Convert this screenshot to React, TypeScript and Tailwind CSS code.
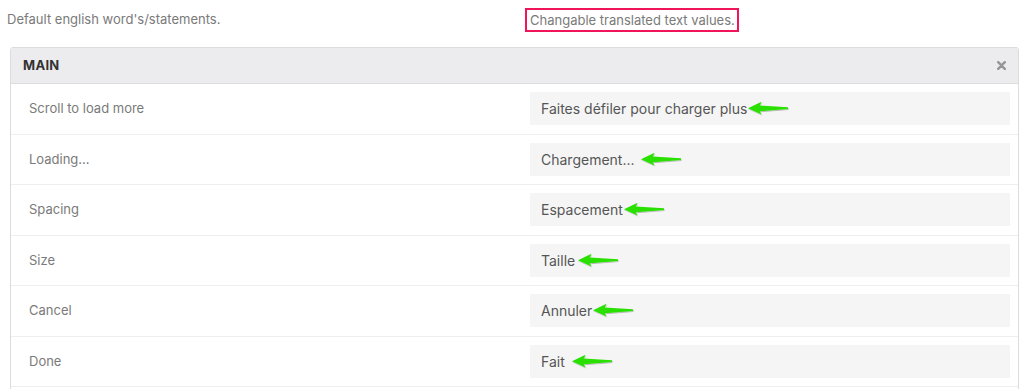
const rows = [
  { label: "Scroll to load more", value: "Faites défiler pour charger plus", gap: "ml-0" },
  { label: "Loading...", value: "Chargement...", gap: "ml-[5px]" },
  { label: "Spacing", value: "Espacement", gap: "ml-0" },
  { label: "Size", value: "Taille", gap: "ml-[2px]" },
  { label: "Cancel", value: "Annuler", gap: "ml-0" },
  { label: "Done", value: "Fait", gap: "ml-[6px]" },
  { label: "", value: "", gap: "" },
];

function GreenArrow() {
  return (
    <svg width="42" height="15" viewBox="0 0 42 15" className="shrink-0">
      <defs>
        <filter id="sh" x="-10%" y="-30%" width="130%" height="170%">
          <feDropShadow dx="0.5" dy="1" stdDeviation="0.6" floodColor="#000" floodOpacity="0.25" />
        </filter>
      </defs>
      <path
        d="M1 7.2 L14.5 0.8 L12.8 4.4 L41 6.3 L41 8 L12.8 10.2 L14.5 13.6 Z"
        fill="#2be000"
        filter="url(#sh)"
      />
    </svg>
  );
}

function CloseIcon() {
  return (
    <svg width="9" height="9" viewBox="0 0 9 9">
      <path d="M1.2 1.2 L7.8 7.8 M7.8 1.2 L1.2 7.8" stroke="#959595" strokeWidth="2.4" strokeLinecap="round" />
    </svg>
  );
}

export default function App() {
  return (
    <div className="w-[1024px] h-[389px] overflow-hidden bg-white font-['Inter',sans-serif]">
      <div className="h-[47px] flex items-start pt-[8px]">
        <div className="w-[525px] pl-[7px] pt-[2px] text-[13px] leading-[18px] text-[#7a7a7a]">
          Default english word's/statements.
        </div>
        <div className="h-[24px] pl-[3px] pr-[2px] border-2 border-[#f0145a] text-[13px] leading-[20px] text-[#7a7a7a]">
          Changable translated text values.
        </div>
      </div>

      <div className="ml-[10px] w-[1009px] border border-[#dcdcdc] rounded-t-[3px]">
        <div className="h-[36px] bg-[#ececee] border-b border-[#dcdcdc] flex items-center justify-between pl-[12px] pr-[12px]">
          <span className="text-[13px] font-bold tracking-[0.3px] text-[#333]">MAIN</span>
          <CloseIcon />
        </div>
        {rows.map((r, i) => (
          <div key={i} className="h-[50.5px] border-b border-[#eeeeee] flex items-center">
            <div className="flex-1 pl-[18px] text-[13px] text-[#7a7a7a]">{r.label}</div>
            <div className="w-[480px] mr-[8px] h-[33px] bg-[#f5f5f5] flex items-center pl-[11px] text-[14px] text-[#555]">
              <span>{r.value}</span>
              {r.value && (
                <span className={r.gap}>
                  <GreenArrow />
                </span>
              )}
            </div>
          </div>
        ))}
      </div>
    </div>
  );
}
